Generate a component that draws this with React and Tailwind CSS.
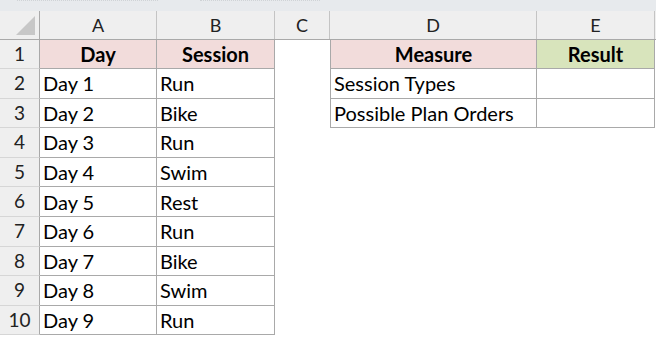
import React from 'react'

const cols = [
    { key: 'A', w: 'w-[117px]' },
    { key: 'B', w: 'w-[118px]' },
    { key: 'C', w: 'w-[55px]' },
    { key: 'D', w: 'w-[207px]' },
    { key: 'E', w: 'w-[118px]' },
]

const days = [
    ['Day 1', 'Run'],
    ['Day 2', 'Bike'],
    ['Day 3', 'Run'],
    ['Day 4', 'Swim'],
    ['Day 5', 'Rest'],
    ['Day 6', 'Run'],
    ['Day 7', 'Bike'],
    ['Day 8', 'Swim'],
    ['Day 9', 'Run'],
]

const measures = ['Session Types', 'Possible Plan Orders']

const RowNum = ({ n }) => (
    <div className='w-[40px] h-full shrink-0 flex items-center justify-center bg-[#efefef] border-r border-r-[#a9a9a9] border-b border-b-[#d6d6d6] text-[#222] text-[19px]'>
        {n}
    </div>
)

const App = () => {
    return (
        <div className='w-[656px] h-[337px] bg-white overflow-hidden text-[20px] text-black' style={{ fontFamily: 'Lato, "Open Sans", sans-serif' }}>
            {/* formula bar edge */}
            <div className='h-[11px] bg-[#e7eaed] relative'>
                <div className='absolute top-0 left-[17px] w-[141px] border-t border-dotted border-[#cfd3d6]'></div>
                <div className='absolute top-0 left-[200px] w-[120px] border-t border-dotted border-[#cfd3d6]'></div>
            </div>

            {/* column letters */}
            <div className='flex h-[29px] bg-[#efefef] border-b border-[#a9a9a9]'>
                <div className='w-[40px] shrink-0 border-r border-[#a9a9a9] flex items-end justify-end pr-[4px] pb-[4px]'>
                    <svg width='19' height='19' viewBox='0 0 19 19'>
                        <polygon points='19,0 19,19 0,19' fill='#c7c7c7' />
                    </svg>
                </div>
                {cols.map(c => (
                    <div key={c.key} className={`${c.w} shrink-0 border-r border-[#c4c4c4] flex items-center justify-center text-[18px] text-[#222]`}>
                        {c.key}
                    </div>
                ))}
            </div>

            {/* row 1 */}
            <div className='flex h-[29px]'>
                <RowNum n={1} />
                <div className='w-[117px] shrink-0 bg-[#f2dcdb] border-r border-b border-[#a9a9a9] flex items-center justify-center font-bold'>Day</div>
                <div className='w-[118px] shrink-0 bg-[#f2dcdb] border-r border-b border-[#a9a9a9] flex items-center justify-center font-bold'>Session</div>
                <div className='w-[55px] shrink-0'></div>
                <div className='w-[207px] shrink-0 bg-[#f2dcdb] border-l border-r border-b border-[#a9a9a9] flex items-center justify-center font-bold'>Measure</div>
                <div className='w-[118px] shrink-0 bg-[#d8e4bc] border-r border-b border-[#a9a9a9] flex items-center justify-center font-bold'>Result</div>
            </div>

            {days.map(([day, session], i) => (
                <div key={day} className='flex h-[29.6px]'>
                    <RowNum n={i + 2} />
                    <div className='w-[117px] shrink-0 border-r border-b border-[#a9a9a9] flex items-center pl-[3px]'>{day}</div>
                    <div className='w-[118px] shrink-0 border-r border-b border-[#a9a9a9] flex items-center pl-[3px]'>{session}</div>
                    <div className='w-[55px] shrink-0'></div>
                    {i < 2 && (
                        <>
                            <div className='w-[207px] shrink-0 border-l border-r border-b border-[#a9a9a9] flex items-center pl-[3px]'>{measures[i]}</div>
                            <div className='w-[118px] shrink-0 border-r border-b border-[#a9a9a9]'></div>
                        </>
                    )}
                </div>
            ))}
        </div>
    )
}

export default App
